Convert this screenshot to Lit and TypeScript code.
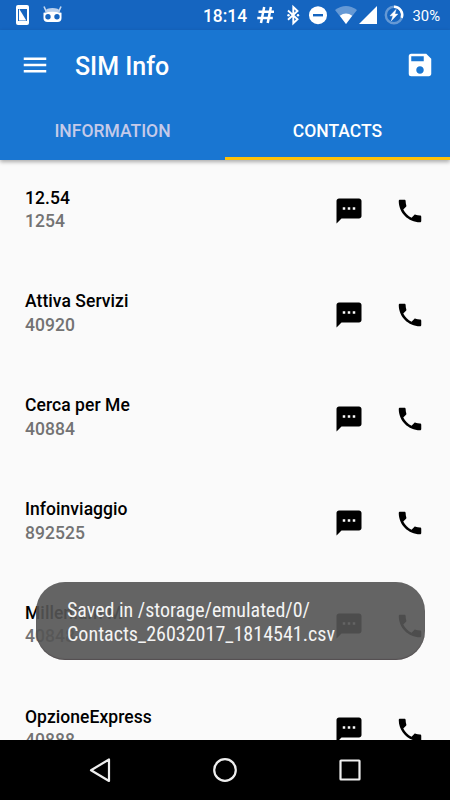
import { LitElement, html, css, svg } from "lit";
import { customElement, property } from "lit/decorators.js";

interface Contact { name: string; number: string; }

const CONTACTS: Contact[] = [
  { name: "12.54", number: "1254" },
  { name: "Attiva Servizi", number: "40920" },
  { name: "Cerca per Me", number: "40884" },
  { name: "Infoinviaggio", number: "892525" },
  { name: "Millenium M", number: "40848" },
  { name: "OpzioneExpress", number: "40888" },
];

@customElement("status-bar")
class StatusBar extends LitElement {
  static styles = css`
    :host { display: block; height: 30px; background: #1565c0; color: #fff; }
    svg { display: block; width: 450px; height: 30px; }
    text { font-family: Roboto, sans-serif; fill: #fff; }
    .clock { font-size: 18px; font-weight: 500; }
    .battery { font-size: 15px; }
  `;
  render() {
    return html`<svg viewBox="0 0 450 30">
      <rect x="16" y="5" width="13" height="20" rx="2" fill="#fff" />
      <rect x="18" y="9" width="9" height="12" fill="#1565c0" />
      <path d="M19 8.5L26.3 20.5H19z" fill="#fff" />
      <path d="M44 6.5l2 4.5M61 6.5l-2 4.5" stroke="#c5d8f0" stroke-width="1.6" />
      <path d="M45 12q0-2.500 2.500-3.300q5-1.500 10 0q2.500 .8 2.500 3.300z" fill="#b9d0ec" />
      <path d="M43.500 12.700q9-1.700 18 0v5.300q0 4-4 4h-10q-4 0-4-4z" fill="#fff" />
      <circle cx="48" cy="16.700" r="2.700" fill="#1565c0" /><circle cx="57" cy="16.700" r="2.700" fill="#1565c0" />
      <text class="clock" x="203" y="22" textLength="44" lengthAdjust="spacingAndGlyphs">18:14</text>
      <path d="M264.200 7l-3.200 16M270.900 7l-3.200 16M258.500 11.800h15.500M257.300 18h15.500" stroke="#fff" stroke-width="2.500" fill="none" />
      <path d="M288 10.500l9.500 8.800-4.200 4V7l4.200 4-9.500 8.800" stroke="#fff" stroke-width="1.900" fill="none" />
      <circle cx="288.500" cy="15.200" r="1.200" fill="#fff" /><circle cx="298" cy="15.200" r="1.200" fill="#fff" />
      <circle cx="318" cy="15.200" r="9" fill="#fff" /><rect x="313" y="14" width="10" height="2.400" fill="#1565c0" />
      <path d="M335 10q11-8 22 0L346 24z" fill="#6599d5" />
      <path d="M339.800 15.800q6.200-4.500 12.400 0L346 24z" fill="#fff" />
      <path d="M377 6v18h-18z" fill="#fff" />
      <circle cx="394" cy="15" r="8.200" fill="none" stroke="#6599d5" stroke-width="2.400" />
      <path d="M394 6.800a8.200 8.200 0 0 1 7.700 11" fill="none" stroke="#fff" stroke-width="2.400" />
      <path d="M396 9.500l-6 6.300h3l-1.600 5 6.400-6.700h-3z" fill="#fff" stroke="#fff" stroke-width=".5" />
      <text class="battery" x="412.500" y="21" textLength="27.500" lengthAdjust="spacingAndGlyphs">30%</text>
    </svg>`;
  }
}

@customElement("app-header")
class AppHeader extends LitElement {
  static styles = css`
    :host { display: block; position: relative; z-index: 1; background: #1976d2; color: #fff;
      font-family: Roboto, sans-serif; box-shadow: 0 2px 4px rgba(0, 0, 0, .32); }
    .bar { height: 70px; display: flex; align-items: center; padding: 0 15px 0 20px; box-sizing: border-box; }
    .title { margin-left: 25px; flex: 1; font-size: 25px; font-weight: 500; padding-top: 2px; letter-spacing: -.02px; }
    svg { width: 30px; height: 30px; fill: #fff; display: block; }
    .tabs { display: grid; grid-template-columns: 1fr 1fr; height: 60px; }
    .tab { display: flex; align-items: center; justify-content: center; font-size: 17.500px; font-weight: 500;
      color: #c5cae9; border-bottom: 3px solid transparent; padding-top: 5px; box-sizing: border-box; }
    .active { color: #fff; border-color: #ffc107; }
  `;
  render() {
    return html`
      <div class="bar">
        <svg viewBox="0 0 24 24"><path d="M3 18h18v-2H3v2zm0-5h18v-2H3v2zm0-7v2h18V6H3z" /></svg>
        <div class="title">SIM Info</div>
        <svg viewBox="0 0 24 24"><path fill-rule="evenodd" d="M17 3H5a2 2 0 0 0-2 2v14a2 2 0 0 0 2 2h14c1.100 0 2-.9 2-2V7l-4-4zm-5 16c-1.660 0-3-1.340-3-3s1.340-3 3-3 3 1.340 3 3-1.340 3-3 3zm3-10H5V5h10v4z" /></svg>
      </div>
      <div class="tabs"><div class="tab">INFORMATION</div><div class="tab active">CONTACTS</div></div>`;
  }
}

@customElement("contact-row")
class ContactRow extends LitElement {
  @property({ attribute: false }) contact!: Contact;
  static styles = css`
    :host { display: flex; height: 103.800px; flex: none; box-sizing: border-box; padding: 26px 25px 0 25px;
      font-family: Roboto, sans-serif; font-size: 17.500px; font-weight: 500; line-height: 23.600px; letter-spacing: .06px; }
    .text { flex: 1; color: #000; padding-top: .7px; }
    .number { color: #737373; }
    .icons { display: flex; gap: 31px; padding-top: 10.200px; }
    svg { width: 30px; height: 30px; display: block; }
  `;
  render() {
    return html`
      <div class="text"><div>${this.contact.name}</div><div class="number">${this.contact.number}</div></div>
      <div class="icons">
        <svg viewBox="0 0 24 24"><path d="M20 2H4c-1.100 0-1.990.9-1.990 2L2 22l4-4h14c1.100 0 2-.9 2-2V4c0-1.100-.9-2-2-2zM9 11H7V9h2v2zm4 0h-2V9h2v2zm4 0h-2V9h2v2z" /></svg>
        <svg viewBox="0 0 24 24"><path d="M6.620 10.790c1.440 2.830 3.760 5.140 6.590 6.590l2.200-2.200c.27-.27.67-.36 1.020-.24 1.120.37 2.330.57 3.570.57.55 0 1 .45 1 1V20c0 .55-.45 1-1 1-9.390 0-17-7.610-17-17 0-.55.45-1 1-1h3.500c.55 0 1 .45 1 1 0 1.250.2 2.450.57 3.570.11.35.03.74-.25 1.020l-2.200 2.200z" /></svg>
      </div>`;
  }
}

@customElement("toast-message")
class ToastMessage extends LitElement {
  @property({ attribute: false }) lines: { text: string; width: number }[] = [];
  static styles = css`
    :host { position: absolute; left: 35.500px; top: 582px; width: 389.500px; height: 78px; box-sizing: border-box;
      border-radius: 29px; background: rgba(85, 85, 85, .908); box-shadow: inset 0 -1px 1px rgba(60, 45, 50, .4); z-index: 2; }
    svg { display: block; width: 389.500px; height: 78px; }
    text { font-family: "Roboto Condensed", Roboto, sans-serif; font-size: 20px; fill: #f4f4f4; }
  `;
  render() {
    return html`<svg viewBox="0 0 389.5 78">${this.lines.map(
      (l, i) => svg`<text x="31" y=${35 + i * 24} textLength=${l.width} lengthAdjust="spacingAndGlyphs">${l.text}</text>`
    )}</svg>`;
  }
}

@customElement("nav-bar")
class NavBar extends LitElement {
  static styles = css`
    :host { display: flex; height: 60px; background: #000; align-items: center; justify-content: center; gap: 95px; }
    svg { width: 30px; height: 30px; fill: none; stroke: #eee; stroke-width: 2.200; stroke-linejoin: round; display: block; }
  `;
  render() {
    return html`
      <svg viewBox="0 0 30 30"><path d="M24 4.500v21.500L6 15.200z" /></svg>
      <svg viewBox="0 0 30 30"><circle cx="15" cy="15" r="10.800" /></svg>
      <svg viewBox="0 0 30 30"><rect x="5.500" y="5.500" width="19" height="19" rx=".5" /></svg>`;
  }
}

@customElement("app-root")
class AppRoot extends LitElement {
  static styles = css`
    :host { display: flex; flex-direction: column; position: relative; width: 450px; height: 800px;
      overflow: hidden; background: #fafafa; }
    .list { flex: 1; min-height: 0; overflow: hidden; display: flex; flex-direction: column; }
  `;
  render() {
    return html`
      <status-bar></status-bar>
      <app-header></app-header>
      <div class="list">${CONTACTS.map((c) => html`<contact-row .contact=${c}></contact-row>`)}</div>
      <nav-bar></nav-bar>
      <toast-message .lines=${[
        { text: "Saved in /storage/emulated/0/", width: 243 },
        { text: "Contacts_26032017_1814541.csv", width: 268 },
      ]}></toast-message>`;
  }
}
